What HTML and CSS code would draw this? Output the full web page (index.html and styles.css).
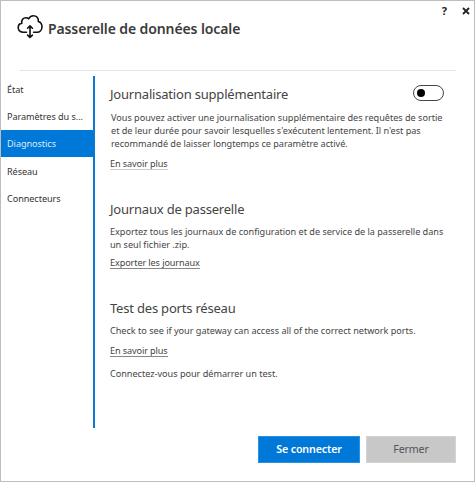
FILE: index.html
```html
<!DOCTYPE html>
<html lang="fr">
<head>
<meta charset="utf-8">
<title>Passerelle de données locale</title>
<link rel="stylesheet" href="styles.css">
</head>
<body>
<div class="window">
  <header class="header">
    <svg class="logo" width="27" height="26" viewBox="0 0 27 26" fill="none" stroke="#111" stroke-width="1.6" stroke-linecap="round" stroke-linejoin="round">
      <path d="M9.5 18.2H6.2C3.2 18.2 1.2 16.2 1.2 13.6C1.2 11.2 2.8 9.5 4.8 9.1C4.2 6 6.2 3.8 8.8 3.8C10 3.8 10.9 4.1 11.6 4.8C12.6 2.8 14.1 1.7 16.3 1.7C19.6 1.7 21.7 4.2 21.3 7.4C23.6 8.1 25 10.1 25 12.7C25 15.8 22.9 18.2 19.9 18.2H16.6"/>
      <path d="M13 13V22.5M10.6 14.2L13 11.8L15.4 14.2M10.6 21.1L13 23.5L15.4 21.1"/>
    </svg>
    <h1 class="title">Passerelle de données locale</h1>
    <div class="controls">
      <span class="help">?</span>
      <svg width="8" height="8" viewBox="0 0 8 8" stroke="#222" stroke-width="1.8"><path d="M1 1L7 7M7 1L1 7"/></svg>
    </div>
  </header>
  <div class="main">
    <nav class="nav">
      <a class="nav-item">État</a>
      <a class="nav-item">Paramètres du s...</a>
      <a class="nav-item active">Diagnostics</a>
      <a class="nav-item low">Réseau</a>
      <a class="nav-item low">Connecteurs</a>
    </nav>
    <div class="content">
      <section class="section logging">
        <div class="heading-row"><h2>Journalisation supplémentaire</h2><span class="toggle"></span></div>
        <p class="indent">Vous pouvez activer une journalisation supplémentaire des requêtes de sortie<br>et de leur durée pour savoir lesquelles s'exécutent lentement. Il n'est pas<br>recommandé de laisser longtemps ce paramètre activé.</p>
        <a class="link pale">En savoir plus</a>
      </section>
      <section class="section logs">
        <h2>Journaux de passerelle</h2>
        <p>Exportez tous les journaux de configuration et de service de la passerelle dans<br>un seul fichier .zip.</p>
        <a class="link">Exporter les journaux</a>
      </section>
      <section class="section ports">
        <h2>Test des ports réseau</h2>
        <p>Check to see if your gateway can access all of the correct network ports.</p>
        <a class="link">En savoir plus</a>
        <p class="status">Connectez-vous pour démarrer un test.</p>
      </section>
    </div>
  </div>
  <footer class="footer">
    <button class="button primary">Se connecter</button>
    <button class="button secondary">Fermer</button>
  </footer>
</div>
</body>
</html>
```
FILE: styles.css
```css
* { box-sizing: border-box; }
body { margin: 0; font-family: "Noto Sans", sans-serif; color: #444; }
h1, h2, p { margin: 0; white-space: nowrap; }
.window { width: 475px; height: 482px; border: 1px solid #bdbdbd; background: #fff; overflow: hidden; }
.header { display: flex; height: 70px; margin: 0 18px 0 19px; border-bottom: 1px solid #e4e4e4; }
.logo { flex: none; margin: 13px 0 0 -3px; }
.title { margin: 16px 0 0 4px; font-size: 14px; line-height: 24px; font-weight: 600; letter-spacing: -0.11px; color: #3b3b3b; }
.controls { display: flex; flex: none; gap: 15px; margin: 5px -14px 0 auto; height: 9px; align-items: center; }
.help { font-size: 11px; line-height: 9px; font-weight: 700; color: #222; }
.main { display: flex; margin-top: 5px; height: 352px; }
.nav { width: 94px; flex: none; border-right: 2px solid #0a78d8; }
.nav-item { display: block; height: 27px; line-height: 28px; padding-left: 6px; font-size: 9.1px; letter-spacing: -0.05px; color: #333; white-space: nowrap; }
.nav-item.active { background: #0078d7; color: #d9ecff; }
.nav-item.low { line-height: 30px; }
.content { flex: 1; min-width: 0; padding: 7px 30px 0 15px; }
.heading-row { display: flex; justify-content: space-between; height: 22px; }
h2 { font-size: 13px; line-height: 22px; font-weight: 400; letter-spacing: -0.2px; color: #444; }
.toggle { width: 31px; height: 16px; margin-top: 2px; border: 1px solid #444; border-radius: 8px; padding: 3px; }
.toggle::before { content: ""; display: block; width: 8px; height: 8px; border-radius: 50%; background: #000; }
p { font-size: 9.15px; line-height: 13px; margin-top: 5px; letter-spacing: -0.02px; }
.indent { padding-left: 1px; margin-top: 6px; }
.link { display: table; margin-top: 8px; font-size: 9.1px; line-height: 11px; letter-spacing: -0.1px; border-bottom: 1px solid #888; white-space: nowrap; }
.pale { border-bottom-color: #ccc; }
.section { height: 115px; }
.logs { height: 99px; }
.logs .link { margin-top: 6px; }
.ports .link { margin-top: 8px; }
.status { margin-top: 10px; }
.footer { display: flex; justify-content: flex-end; gap: 6px; padding: 8px 18px 0 0; }
.button { height: 27px; padding: 0; border: 1px solid; font: 400 10.7px/25px "Noto Sans", sans-serif; letter-spacing: -0.15px; }
.primary { width: 102px; background: #0078d7; border-color: #2b91e2; color: #fff; font-weight: 600; }
.secondary { width: 90px; background: #c8c8c8; border-color: #d4d4d4; color: #555; }
```
